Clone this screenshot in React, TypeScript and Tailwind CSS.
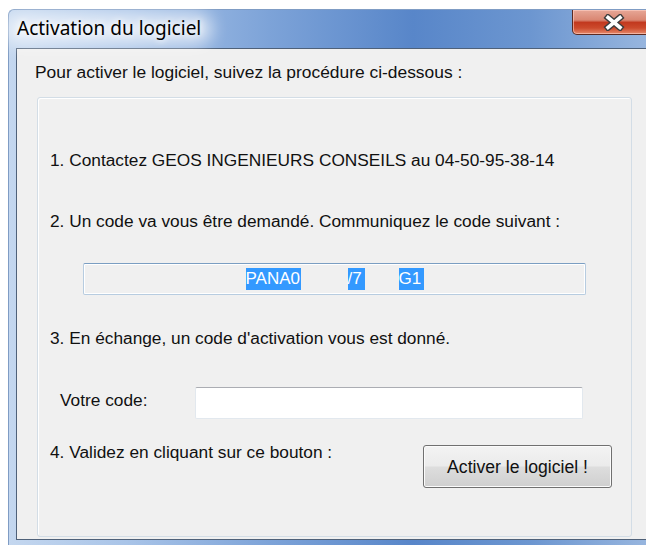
import React from "react";

const body = { fontFamily: '"Liberation Sans", Arial, sans-serif' };

function CloseGlyph() {
  return (
    <svg width="22" height="17" viewBox="0 0 22 17">
      <path d="M5 3.5 L17 13.5 M17 3.5 L5 13.5" stroke="#3d3d3d" strokeWidth="6.4" strokeLinecap="square" />
      <path d="M5 3.5 L17 13.5 M17 3.5 L5 13.5" stroke="#ffffff" strokeWidth="3.6" strokeLinecap="square" />
    </svg>
  );
}

export default function App() {
  return (
    <div className="w-[646px] h-[545px] bg-white pl-[8px] pt-[9px] overflow-hidden" style={body}>
      <div className="w-[652px] h-[536px] flex flex-col rounded-tl-[6px] border-l border-t border-[#7f9cc4] bg-[linear-gradient(90deg,#c4d7ef_0%,#a9c4e8_18%,#7da3d8_40%,#5886c9_62%,#6c96d0_80%,#9cb9e0_100%)]">
        {/* title bar */}
        <div className="h-[38px] flex items-start relative">
          <div className="absolute left-[-6px] top-[2px] w-[210px] h-[34px] rounded-full bg-white/60 blur-[8px]" />
          <div
            className="relative pl-[8px] pt-[6px] text-[19px] leading-[24px] text-black [text-shadow:0_0_6px_#fff,0_0_10px_#fff]"
            style={{ fontFamily: '"Noto Sans", "Open Sans", sans-serif' }}
          >
            Activation du logiciel
          </div>
          <div className="ml-auto w-[88px] h-[25px] rounded-bl-[5px] border border-t-0 border-[#5b2a22] shadow-[inset_0_0_0_1px_rgba(255,210,200,0.6)] bg-[linear-gradient(180deg,#e7a797_0%,#d98672_42%,#c2391f_52%,#cc4a2c_75%,#e68a6c_100%)] flex items-center justify-center pr-[4px]">
            <CloseGlyph />
          </div>
        </div>

        {/* client area */}
        <div className="ml-[7px] h-[492px] border border-r-0 border-[#4f6179] bg-[#f0f0f0] flex flex-col">
          <div className="pl-[18px] pt-[13px] h-[48px] text-[17.4px] leading-[20px] text-[#111]">
            Pour activer le logiciel, suivez la procédure ci-dessous :
          </div>

          <div className="ml-[20px] w-[595px] h-[440px] rounded-[3px] border border-[#d3dde6] shadow-[inset_1px_1px_0_#ffffff] flex flex-col pl-[12px] text-[17.3px] leading-[20px] text-[#111]">
            <div className="mt-[52px] h-[20px]">1. Contactez GEOS INGENIEURS CONSEILS au 04-50-95-38-14</div>
            <div className="mt-[41px] h-[20px]">2. Un code va vous être demandé. Communiquez le code suivant :</div>

            <div className="mt-[32px] ml-[33px] w-[503px] h-[32px] rounded-[2px] border border-[#b7cce0] border-t-[#7b9ec2] shadow-[inset_0_0_0_1px_#ffffff] bg-[#f0f0f0] flex items-center justify-center">
              <div className="flex items-center text-[17px] leading-[22px] text-white">
                <span className="w-[55px] h-[22px] bg-[#3399ff] overflow-hidden whitespace-nowrap">PANA0</span>
                <span className="w-[47px]" />
                <span className="w-[17px] h-[22px] bg-[#3399ff]">/7</span>
                <span className="w-[34px]" />
                <span className="w-[25px] h-[22px] bg-[#3399ff]">G1</span>
              </div>
            </div>

            <div className="mt-[33px] h-[20px]">3. En échange, un code d'activation vous est donné.</div>

            <div className="mt-[39px] h-[32px] flex items-center">
              <div className="ml-[10px] w-[135px] mb-[6px]">Votre code:</div>
              <div className="w-[388px] h-[32px] rounded-[2px] border border-[#e2e8ee] border-t-[#abadb3] bg-white" />
            </div>

            <div className="mt-[23px] flex items-start">
              <div className="h-[20px]">4. Validez en cliquant sur ce bouton :</div>
              <button className="ml-auto mr-[19px] mt-[3px] w-[189px] h-[43px] rounded-[3px] border border-[#707070] shadow-[inset_0_0_0_1px_#fbfbfb] bg-[linear-gradient(180deg,#f3f3f3_0%,#ebebeb_48%,#dddddd_52%,#cfcfcf_100%)] text-[17.6px] leading-[20px] text-[#111]">
                Activer le logiciel !
              </button>
            </div>
          </div>
        </div>
      </div>
    </div>
  );
}
